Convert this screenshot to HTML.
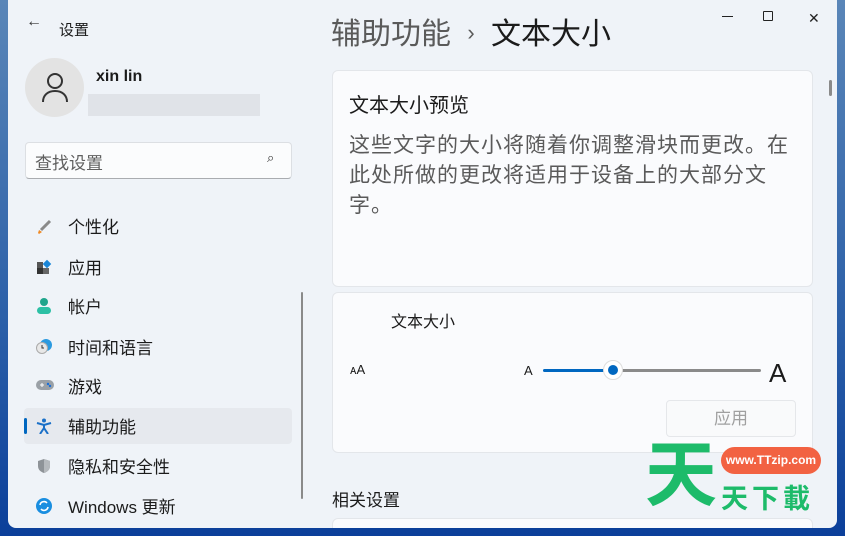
<!DOCTYPE html>
<html><head><meta charset="utf-8"><style>
*{margin:0;padding:0;box-sizing:border-box}
body{width:845px;height:536px;overflow:hidden;background:linear-gradient(180deg,#5a86b8 0%,#2b5fa8 60%,#0b3f9a 100%);font-family:"Liberation Sans","Noto Sans CJK SC",sans-serif;position:relative}
.win{position:absolute;left:8px;top:0;width:829px;height:528px;background:#eff3f8;border-radius:0 0 8px 8px;overflow:hidden}
.abs{position:absolute}
.t{color:#1b1b1b}
.card{position:absolute;background:#fafbfd;border:1px solid #e3e6ea;border-radius:6px}
.nav{position:absolute;left:60px;font-size:17px;color:#1b1b1b}
.ic{position:absolute;left:28px;width:16px;height:16px}
</style></head><body>
<div class="win">
<div class="abs t" style="left:18px;top:13px;font-size:16px;color:#333">←</div>
<div class="abs t" style="left:51px;top:19px;font-size:15px">设置</div>
<div class="abs" style="left:17px;top:58px;width:59px;height:59px;border-radius:50%;background:#e3e3e3"></div>
<svg class="abs" style="left:30px;top:70px" width="34" height="34" viewBox="0 0 34 34"><circle cx="17" cy="11" r="7" fill="none" stroke="#333" stroke-width="2"/><path d="M5 32c0-7 5-11 12-11s12 4 12 11" fill="none" stroke="#333" stroke-width="2"/></svg>
<div class="abs t" style="left:88px;top:68px;font-size:16px;font-weight:bold">xin lin</div>
<div class="abs" style="left:80px;top:94px;width:172px;height:22px;background:#dcdfe3;opacity:.8"></div>
<div class="abs" style="left:17px;top:142px;width:267px;height:37px;background:#fbfcfd;border:1px solid #dcdfe3;border-bottom-color:#a9acb0;border-radius:4px"></div>
<div class="abs" style="left:27px;top:149px;font-size:17px;color:#5f5f5f">查找设置</div>
<div class="abs" style="left:259px;top:150px;font-size:13px;color:#333">⌕</div>
<div class="ic" style="top:219px"><svg width="16" height="16"><path d="M14 2L5 11" stroke="#8a8a8a" stroke-width="3"/><path d="M3 11l3 2-3 2-1-1z" fill="#f08a24"/></svg></div>
<div class="nav" style="top:213px">个性化</div>
<div class="ic" style="top:259px"><svg width="16" height="16"><rect x="1" y="3" width="6" height="6" fill="#555"/><rect x="1" y="9" width="6" height="6" fill="#333"/><rect x="7" y="9" width="6" height="6" fill="#666"/><rect x="8" y="2" width="6" height="6" fill="#1a86d8" transform="rotate(45 11 5)"/></svg></div>
<div class="nav" style="top:254px">应用</div>
<div class="ic" style="top:298px"><svg width="16" height="16"><circle cx="8" cy="4" r="4" fill="#1fa58c"/><rect x="1" y="9" width="14" height="7" rx="3.5" fill="#2cc0a5"/></svg></div>
<div class="nav" style="top:293px">帐户</div>
<div class="ic" style="top:338px"><svg width="16" height="16"><circle cx="10" cy="7" r="6" fill="#2b9ae0"/><circle cx="6" cy="10" r="5.5" fill="#e8e8e8" stroke="#aaa"/><path d="M6 7v3h2" stroke="#333" fill="none"/></svg></div>
<div class="nav" style="top:334px">时间和语言</div>
<div class="ic" style="top:378px"><svg width="18" height="14"><rect x="0" y="2" width="18" height="10" rx="5" fill="#9aa0a6"/><path d="M4 7h4M6 5v4" stroke="#fff"/><circle cx="12" cy="6" r="1.2" fill="#1a6fd8"/><circle cx="14" cy="8" r="1.2" fill="#1a6fd8"/></svg></div>
<div class="nav" style="top:373px">游戏</div>
<div class="abs" style="left:16px;top:408px;width:268px;height:36px;background:#e6e9ee;border-radius:4px"></div>
<div class="abs" style="left:16px;top:418px;width:3px;height:16px;background:#0067c0;border-radius:2px"></div>
<div class="ic" style="top:418px"><svg width="16" height="16"><circle cx="8" cy="2.5" r="2" fill="#1a70c8"/><path d="M1 5l7 2 7-2M8 7v3l-4 6M8 10l4 6" stroke="#1a70c8" stroke-width="2" fill="none"/></svg></div>
<div class="nav" style="top:413px">辅助功能</div>
<div class="ic" style="top:458px"><svg width="16" height="16"><path d="M8 1l6 2v5c0 4-3 6-6 7-3-1-6-3-6-7V3z" fill="#8e9398"/><path d="M8 1l6 2v5c0 4-3 6-6 7z" fill="#b5b9bd"/></svg></div>
<div class="nav" style="top:453px">隐私和安全性</div>
<div class="ic" style="top:498px"><svg width="16" height="16"><circle cx="8" cy="8" r="8" fill="#1a8ee0"/><path d="M4 7a4 4 0 0 1 7-2M12 9a4 4 0 0 1-7 2" stroke="#fff" stroke-width="1.6" fill="none"/></svg></div>
<div class="nav" style="top:493px">Windows 更新</div>
<div class="abs" style="left:293px;top:292px;width:2px;height:207px;background:#8a8a8a;border-radius:1px"></div>

<div class="abs" style="left:323px;top:9px;font-size:30px;color:#5a5a5a">辅助功能 <span style="font-size:22px;position:relative;top:-4px;margin:0 8px">›</span> <span style="color:#1b1b1b">文本大小</span></div>
<div class="abs" style="left:714px;top:16px;width:11px;height:1px;background:#222"></div>
<div class="abs" style="left:755px;top:11px;width:10px;height:10px;border:1px solid #222;border-radius:1px"></div>
<div class="abs" style="left:800px;top:10px;font-size:14px;color:#222">✕</div>

<div class="card" style="left:324px;top:70px;width:481px;height:217px"></div>
<div class="abs t" style="left:341px;top:89px;font-size:20px">文本大小预览</div>
<div class="abs" style="left:341px;top:131px;width:448px;font-size:21px;letter-spacing:1px;line-height:30px;color:#5a5a5a">这些文字的大小将随着你调整滑块而更改。在此处所做的更改将适用于设备上的大部分文字。</div>

<div class="card" style="left:324px;top:292px;width:481px;height:161px"></div>
<div class="abs t" style="left:383px;top:308px;font-size:16px">文本大小</div>
<div class="abs t" style="left:342px;top:362px;font-size:13px">ᴀA</div>
<div class="abs t" style="left:516px;top:363px;font-size:13px">A</div>
<div class="abs" style="left:535px;top:369px;width:72px;height:3px;background:#0067c0;border-radius:2px"></div>
<div class="abs" style="left:605px;top:369px;width:148px;height:3px;background:#8a8a8a;border-radius:2px"></div>
<div class="abs" style="left:595px;top:360px;width:20px;height:20px;border-radius:50%;background:#fff;border:1px solid #ddd"></div>
<div class="abs" style="left:600px;top:365px;width:10px;height:10px;border-radius:50%;background:#0067c0"></div>
<div class="abs t" style="left:761px;top:358px;font-size:26px">A</div>
<div class="abs" style="left:658px;top:400px;width:130px;height:37px;border:1px solid #e5e7ea;border-radius:4px;background:#f9fafb;text-align:center;line-height:35px;font-size:17px;color:#a0a0a0">应用</div>

<div class="abs t" style="left:324px;top:486px;font-size:17px">相关设置</div>
<div class="card" style="left:324px;top:518px;width:481px;height:20px"></div>
<div class="abs" style="left:821px;top:80px;width:3px;height:16px;background:#8a8a8a;border-radius:2px"></div>

<div class="abs" style="left:637px;top:440px;font-size:72px;font-weight:bold;color:#1dbb6a;line-height:1">天</div>
<div class="abs" style="left:713px;top:447px;width:100px;height:27px;border-radius:14px;background:#f26242;color:#fff;font-size:12px;font-weight:bold;text-align:center;line-height:27px">www.TTzip.com</div>
<div class="abs" style="left:713px;top:477px;font-size:27px;font-weight:bold;color:#1dbb6a;letter-spacing:4px">天下載</div>
</div>
</body></html>
